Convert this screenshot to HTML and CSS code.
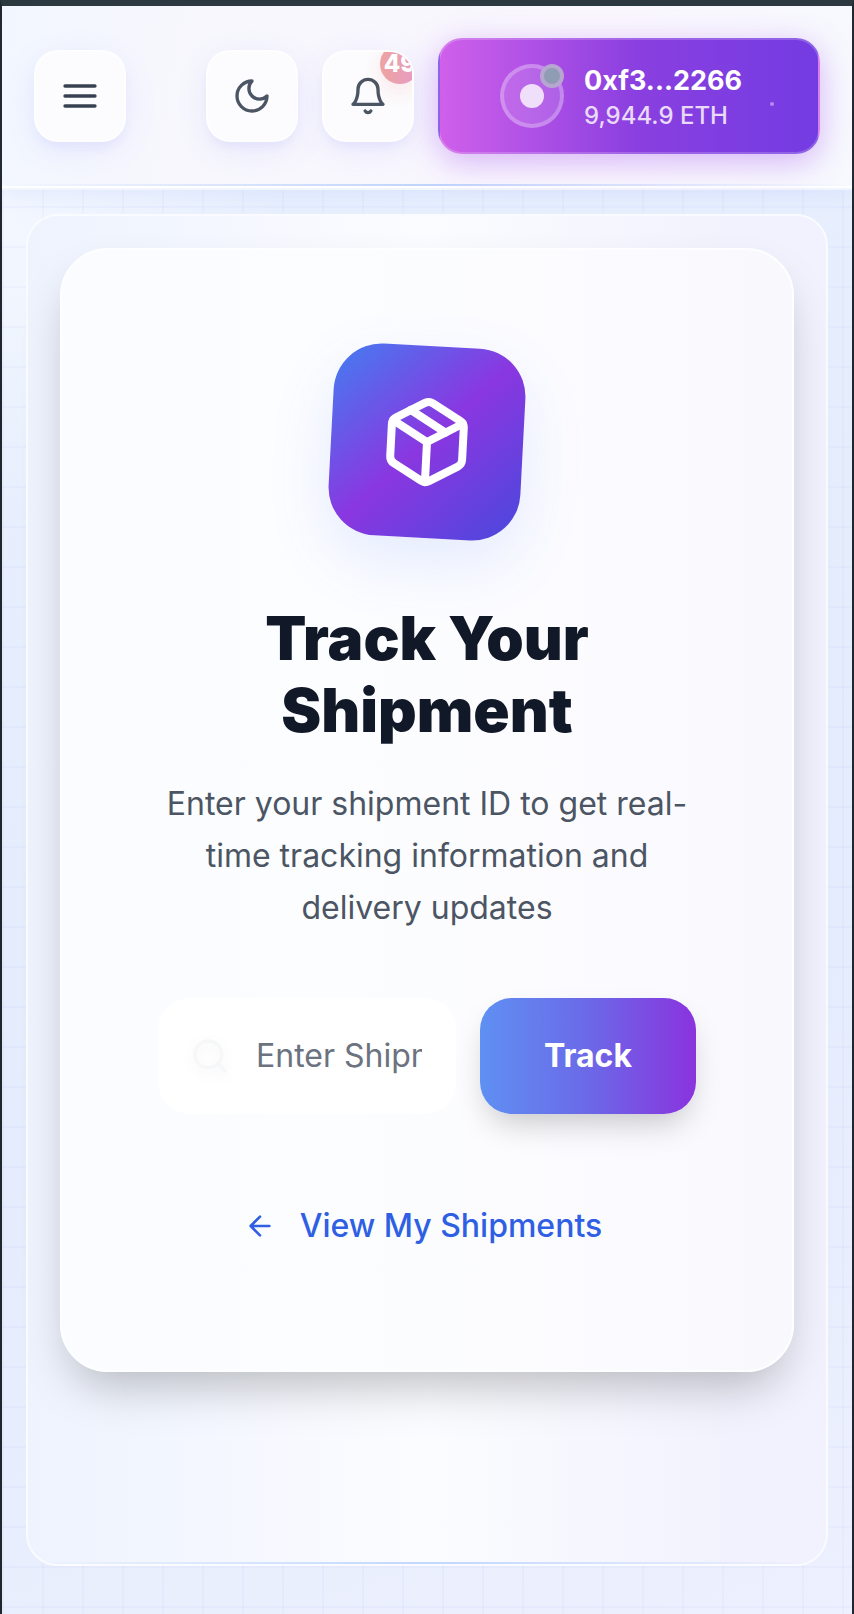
FILE: index.html
```
<!DOCTYPE html>
<html lang="en">
<head>
<meta charset="utf-8">
<meta name="viewport" content="width=device-width, initial-scale=1">
<title>Track Your Shipment</title>
<link rel="stylesheet" href="styles.css">
</head>
<body>
<div class="app">
  <header class="topbar">
    <button class="icon-btn menu-btn" type="button" aria-label="Open menu">
      <svg viewBox="0 0 24 24"><path d="M3 6h18M3 12h18M3 18h18"/></svg>
    </button>
    <button class="icon-btn" type="button" aria-label="Toggle dark mode">
      <svg viewBox="0 0 24 24"><path d="M12 3a6 6 0 0 0 9 9 9 9 0 1 1-9-9Z"/></svg>
    </button>
    <button class="icon-btn" type="button" aria-label="Notifications">
      <svg viewBox="0 0 24 24"><path d="M6 8a6 6 0 0 1 12 0c0 7 3 9 3 9H3s3-2 3-9"/><path d="M10.3 21a1.94 1.94 0 0 0 3.4 0"/></svg>
      <span class="badge">49</span>
    </button>
    <button class="wallet" type="button">
      <span class="avatar"><span class="avatar-dot"></span><span class="status"></span></span>
      <span class="wallet-text">
        <span class="address">0xf3...2266</span>
        <span class="balance">9,944.9 ETH</span>
      </span>
      <span class="spark"></span>
    </button>
  </header>

  <main class="page">
    <div class="panel">
      <section class="card">
        <div class="hero-icon">
          <svg viewBox="0 0 24 24"><path d="M16.5 9.4 7.5 4.21"/><path d="M21 16V8a2 2 0 0 0-1-1.73l-7-4a2 2 0 0 0-2 0l-7 4A2 2 0 0 0 3 8v8a2 2 0 0 0 1 1.73l7 4a2 2 0 0 0 2 0l7-4A2 2 0 0 0 21 16z"/><path d="M3.27 6.96 12 12.01l8.73-5.05M12 22.08V12"/></svg>
        </div>
        <h1 class="title">Track Your Shipment</h1>
        <p class="lead">Enter your shipment ID to get real-time tracking information and delivery updates</p>
        <form class="track-form">
          <div class="field">
            <svg class="field-icon" viewBox="0 0 24 24"><circle cx="11" cy="11" r="8"/><path d="m21 21-4.3-4.3"/></svg>
            <input class="field-input" type="text" placeholder="Enter Shipment ID" aria-label="Shipment ID">
          </div>
          <button class="track-btn" type="submit">Track</button>
        </form>
        <a class="back-link" href="#">
          <svg viewBox="0 0 24 24"><path d="m12 19-7-7 7-7M19 12H5"/></svg>
          <span>View My Shipments</span>
        </a>
      </section>
    </div>
  </main>
</div>
</body>
</html>
```
FILE: styles.css
```
* { box-sizing: border-box; }

body {
  margin: 0;
  font-family: Inter, "Liberation Sans", sans-serif;
  color: #111827;
}

button, input { font-family: inherit; }

svg {
  fill: none;
  stroke: currentColor;
  stroke-width: 2;
  stroke-linecap: round;
  stroke-linejoin: round;
}

.app {
  min-height: 100vh;
  display: flex;
  flex-direction: column;
  border: 2px solid #20262b;
  border-top: 6px solid #2c383d;
  border-bottom: 0;
  background:
    linear-gradient(rgba(99, 102, 241, 0.04) 2px, transparent 2px) 0 0 / 40px 40px,
    linear-gradient(90deg, rgba(99, 102, 241, 0.04) 2px, transparent 2px) 0 0 / 40px 40px,
    radial-gradient(circle at 0 14%, rgba(248, 250, 255, 0.7), transparent 280px),
    linear-gradient(160deg, #e9f1fe, #e4ecfd 60%, #edf0fe);
}

/* Header */
.topbar {
  display: flex;
  align-items: center;
  gap: 24px;
  padding: 32px;
  border-bottom: 2px solid #fff;
  background:
    linear-gradient(90deg, transparent, rgba(59, 130, 246, 0.3), transparent) bottom / 100% 2px no-repeat,
    linear-gradient(100deg, #f2f7ff, #f7f7fd 22%, #faf7fe 70%, #f7f9fe);
  background-origin: padding-box;
  background-clip: padding-box;
  box-shadow: 0 2px 0 #f1f5fe, 0 6px 20px rgba(99, 132, 241, 0.1);
}

.icon-btn {
  position: relative;
  flex: none;
  display: grid;
  place-items: center;
  width: 92px;
  height: 92px;
  padding: 0;
  border: 2px solid rgba(255, 255, 255, 0.6);
  border-radius: 24px;
  background: #fcfcfe;
  color: #4b5563;
  overflow: hidden;
  box-shadow: 0 8px 32px rgba(99, 102, 241, 0.1), 0 8px 12px -4px rgba(99, 102, 241, 0.08);
}

.icon-btn svg { width: 40px; height: 40px; }

.menu-btn { margin-right: auto; color: #374151; }

.badge {
  position: absolute;
  top: -8px;
  right: -8px;
  display: grid;
  place-items: center;
  width: 40px;
  height: 40px;
  border-radius: 50%;
  background: linear-gradient(90deg, #eea3a0, #e69bc8);
  color: #fff;
  font-size: 24px;
  line-height: 32px;
  font-weight: 800;
  box-shadow: 0 8px 24px rgba(239, 68, 68, 0.12);
}

.wallet {
  display: flex;
  align-items: center;
  gap: 20px;
  height: 116px;
  padding: 0 44px 0 60px;
  border: 2px solid rgba(255, 255, 255, 0.2);
  border-radius: 24px;
  background: linear-gradient(90deg, #cf60ea, #8a3fe0 52%, #733ce2);
  color: #fff;
  text-align: left;
  box-shadow: 0 8px 32px rgba(147, 51, 234, 0.35);
}

.avatar {
  position: relative;
  display: grid;
  place-items: center;
  width: 64px;
  height: 64px;
  border: 4px solid rgba(255, 255, 255, 0.25);
  border-radius: 50%;
  background: rgba(255, 255, 255, 0.12);
}

.avatar-dot {
  width: 24px;
  height: 24px;
  border-radius: 50%;
  background: #f0dffa;
}

.status {
  position: absolute;
  top: -4px;
  right: -4px;
  width: 24px;
  height: 24px;
  border: 4px solid #b7a6d0;
  border-radius: 50%;
  background: #8f9cb4;
}

.wallet-text {
  display: flex;
  flex-direction: column;
  padding-top: 6px;
}

.address { font-size: 27px; line-height: 34px; font-weight: 700; }

.balance { font-size: 24px; line-height: 36px; font-weight: 500; color: #e9daf9; }

.spark {
  width: 4px;
  height: 4px;
  margin: 16px 0 0 8px;
  border-radius: 50%;
  background: #b48cf0;
}

/* Page */
.page {
  flex: 1;
  display: flex;
  padding: 26px 24px 48px;
}

.panel {
  flex: 1;
  min-width: 0;
  padding: 32px;
  border: 2px solid #f9fbff;
  border-radius: 32px;
  background:
    linear-gradient(90deg, transparent, rgba(59, 130, 246, 0.3), transparent) bottom / 100% 2px no-repeat,
    linear-gradient(90deg, #eef3fe, #fbfcff 50%, #f2f2fe 88%);
  background-clip: padding-box;
}

.card {
  display: flex;
  flex-direction: column;
  align-items: center;
  padding: 96px;
  border: 2px solid #fdfeff;
  border-radius: 48px;
  background: linear-gradient(90deg, #fafcff, #fcfdff 35%, #fcfcff 65%, #f9f8fd);
  text-align: center;
  box-shadow: 0 24px 48px -12px rgba(0, 0, 0, 0.26);
}

.hero-icon {
  display: grid;
  place-items: center;
  width: 192px;
  height: 192px;
  border-radius: 48px;
  background: linear-gradient(135deg, #437df1, #8a37e0 50%, #4a48dd);
  color: #fff;
  transform: rotate(3deg);
  box-shadow: 0 24px 64px rgba(59, 110, 246, 0.12);
}

.hero-icon svg { width: 96px; height: 96px; }

.title {
  margin: 64px 0 32px;
  font-size: 60px;
  line-height: 72px;
  font-weight: 900;
}

.lead {
  margin: 0;
  font-size: 32px;
  line-height: 52px;
  color: #4b5563;
}

.track-form {
  display: flex;
  gap: 24px;
  width: 100%;
  margin: 64px 0;
}

.field {
  position: relative;
  flex: 1;
  min-width: 0;
}

.field-icon {
  position: absolute;
  z-index: 1;
  top: 38px;
  left: 32px;
  width: 40px;
  height: 40px;
  color: #f5f7f8;
  filter: drop-shadow(0 4px 6px rgba(0, 0, 0, 0.05));
}

.field-input {
  width: 100%;
  height: 116px;
  padding: 0 32px 2px 96px;
  border: 2px solid #fff;
  border-radius: 32px;
  background: #fff;
  color: #111827;
  font-size: 32px;
}

.field-input::placeholder { color: #6b7280; opacity: 1; }

.track-btn {
  padding: 0 64px 2px;
  border: 0;
  border-radius: 32px;
  background: linear-gradient(90deg, #5f90f2, #6b69e8 50%, #8a33de);
  color: #fff;
  font-size: 32px;
  font-weight: 700;
  box-shadow: 0 16px 32px -8px rgba(0, 0, 0, 0.22);
}

.back-link {
  display: flex;
  align-items: center;
  gap: 24px;
  padding: 24px 8px 24px 0;
  color: #2f5fe3;
  font-size: 32px;
  line-height: 48px;
  font-weight: 500;
  text-decoration: none;
}

.back-link svg { width: 32px; height: 32px; }
```
